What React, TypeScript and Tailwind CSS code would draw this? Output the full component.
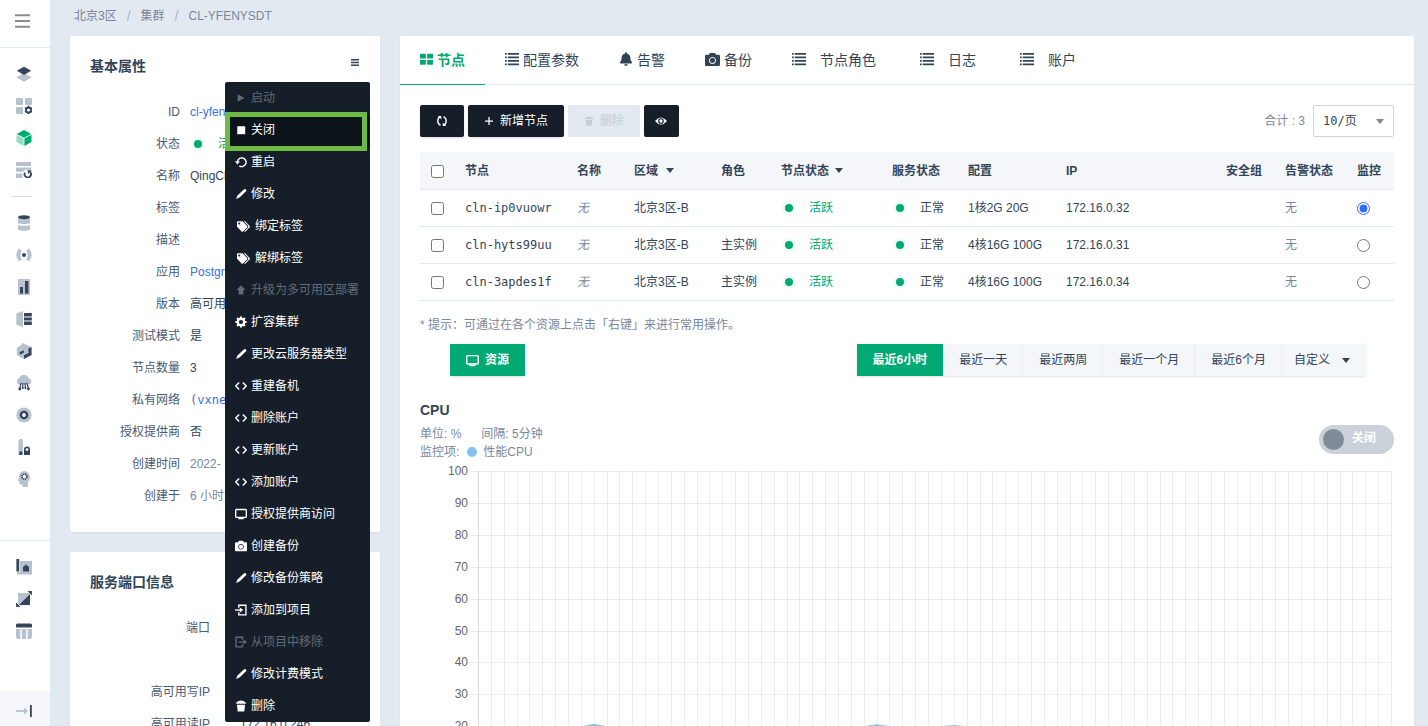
import { useState } from 'react';
import type { ReactNode } from 'react';
import { FaBell, FaCamera, FaTags } from 'react-icons/fa';

const DARK = '#36435c';
const LIGHT = '#b6c2cd';

function Svg({ size = 16, children }: { size?: number; children: ReactNode }) {
  return (
    <svg width={size} height={size} viewBox="0 0 16 16" fill="none" className="shrink-0" aria-hidden="true">
      {children}
    </svg>
  );
}

type NavItem = { label: string; icon: ReactNode };

const computeNav: NavItem[] = [
  {
    label: '产品总览',
    icon: (
      <>
        <path d="M8 7 15.5 11.3 8 15.8.5 11.3Z" fill={LIGHT} />
        <path d="M8 .4 15.5 4.7 8 9.2.5 4.7Z" fill={DARK} stroke="#fff" strokeWidth=".4" />
      </>
    ),
  },
  {
    label: '应用管理',
    icon: (
      <>
        <path d="M1 0h5a1 1 0 0 1 1 1v5a1 1 0 0 1-1 1H1a1 1 0 0 1-1-1V1a1 1 0 0 1 1-1ZM10 0h5a1 1 0 0 1 1 1v5a1 1 0 0 1-1 1h-5a1 1 0 0 1-1-1V1a1 1 0 0 1 1-1ZM1 9h6v7H1a1 1 0 0 1-1-1v-5a1 1 0 0 1 1-1Z" fill={LIGHT} />
        <circle cx="12.5" cy="12" r="2.5" stroke={DARK} strokeWidth="1.8" />
        <path
          d="M12.5 7.8v1.6M12.5 14.6v1.4M9 10l1.4.8M14.6 13.2l1.4.8M9 14l1.4-.8M14.6 10.8l1.4-.8"
          stroke={DARK}
          strokeWidth="1.8"
        />
      </>
    ),
  },
  {
    label: '集群',
    icon: (
      <>
        <path d="M8 0 15.2 3.9 8 7.8.8 3.9Z" fill="#00aa72" />
        <path d="M.5 4.8 7.6 8.6V16L.5 12Z" fill="#99dcc5" />
        <path d="M15.5 4.8 8.4 8.6V16l7.1-4Z" fill="#00aa72" />
      </>
    ),
  },
  {
    label: '定时任务',
    icon: (
      <>
        <path d="M0 0h15v4H0zM0 5.6h15v2.2H9L7.4 9.8H0zM0 11.6h6.2V16H0z" fill={LIGHT} />
        <path d="M9 10.6a3.2 3.2 0 1 0 5.2-.4" stroke={DARK} strokeWidth="1.8" />
        <path d="M11.4 8.2h4.4l-3.4 3.8Z" fill={DARK} />
      </>
    ),
  },
];

const serviceNav: NavItem[] = [
  {
    label: '数据库',
    icon: (
      <>
        <path d="M2 3v5c0 1.3 12 1.3 12 0V3ZM2 10v4c0 2.4 12 2.4 12 0v-4c-2 1.2-10 1.2-12 0Z" fill={LIGHT} />
        <ellipse cx="8" cy="2.2" rx="6" ry="2" fill={DARK} />
      </>
    ),
  },
  {
    label: '消息队列',
    icon: (
      <>
        <path d="M3 1.5 5.6 3.4Q3.4 8 5.6 12.6L3 14.5Q-2.4 8 3 1.5ZM13 1.5l-2.6 1.9q2.2 4.6 0 9.2L13 14.5Q18.4 8 13 1.5Z" fill={LIGHT} />
        <circle cx="8" cy="8" r="2" fill={DARK} />
      </>
    ),
  },
  {
    label: '大数据',
    icon: (
      <>
        <path d="M2 0h12v16H2z" fill={LIGHT} />
        <path d="M4 8h3v6.4H4zM9 2h3.4v12.4H9z" fill={DARK} />
      </>
    ),
  },
  {
    label: '存储',
    icon: (
      <>
        <path d="M.3 2.6 7 0v16L.3 13.4Z" fill={LIGHT} />
        <path d="M8 2h7.8v3.4H8zM8 6.4h7.8v3.2H8zM8 10.6h7.8V14H8z" fill={DARK} />
      </>
    ),
  },
  {
    label: '容器',
    icon: (
      <>
        <path d="M7 0 12 2.4 15.5 4 8 16 .8 12V4.6L4 3Z" fill={LIGHT} />
        <path d="M15.6 4 12.4 5.6V10L8 12.2V16l7.6-4ZM3.8 9l4-1.8v2.6l-4 2Z" fill={DARK} />
      </>
    ),
  },
  {
    label: '物联网',
    icon: (
      <>
        <path d="M3 9.6A3.6 3.6 0 0 1 3.2 3 5 5 0 0 1 12.6 3.2 3.4 3.4 0 0 1 13.4 9.6Z" fill={LIGHT} />
        <path d="M5 8 3.6 14M7 8l-.4 4.6M9 8l.4 4.6M11 8l1.6 6" stroke={DARK} strokeWidth="1.2" />
        <circle cx="3.8" cy="14" r="1.4" fill={DARK} />
        <circle cx="6.7" cy="13" r="1.1" fill={DARK} />
        <circle cx="9.5" cy="13" r="1.1" fill={DARK} />
        <circle cx="12.4" cy="14" r="1.4" fill={DARK} />
      </>
    ),
  },
  {
    label: '镜像',
    icon: (
      <>
        <circle cx="8" cy="8" r="7.6" fill={LIGHT} />
        <circle cx="8" cy="8" r="3.1" fill="#fff" stroke={DARK} strokeWidth="2.4" />
      </>
    ),
  },
  {
    label: '安全',
    icon: (
      <>
        <path d="M2.4 16V2l1.4-2h2L7 2v14Z" fill={LIGHT} />
        <path d="M3.4 12.4h2.8V16H3.4zM8 10h6v6H8z" fill={DARK} />
        <circle cx="11" cy="10.6" r="2.2" fill="#fff" stroke={DARK} strokeWidth="1.6" />
      </>
    ),
  },
  {
    label: '人工智能',
    icon: (
      <>
        <path d="M8 0a6 6 0 0 1 6 6c0 2-.6 3.6-2 5v5H6.4v-2.4H3.6v-3L2 10 3 6A5.4 5.4 0 0 1 8 0Z" fill={LIGHT} />
        <circle cx="8.4" cy="5.6" r="2.5" fill="#fff" stroke={DARK} strokeWidth="1.6" strokeDasharray="1.4 .6" />
      </>
    ),
  },
];

const bottomNav: NavItem[] = [
  {
    label: '企业中心',
    icon: (
      <>
        <path d="M4 2h12v13.5H1V13h3Z" fill={LIGHT} />
        <path d="M.4 0h2.8v12.4H.4zM7 12.4V8l3-2.6L13 8v4.4Z" fill={DARK} />
      </>
    ),
  },
  {
    label: '迁移',
    icon: (
      <>
        <path d="M2 2h12v12H2z" fill={LIGHT} />
        <path d="M14 3v11H3Z" fill={DARK} />
        <path d="M10.6-.4h5.8v5.8ZM-.4 10.6v5.8h5.8Z" fill={DARK} stroke="#fff" strokeWidth=".8" />
      </>
    ),
  },
  {
    label: '控制台',
    icon: (
      <>
        <path d="M0 6h4.4v10H2a2 2 0 0 1-2-2ZM5.8 6h4.4v10H5.8zM11.6 6H16v8a2 2 0 0 1-2 2h-2.4Z" fill={LIGHT} />
        <path d="M0 4.6V2A1.6 1.6 0 0 1 1.6.4h12.8A1.6 1.6 0 0 1 16 2v2.6Z" fill={DARK} />
      </>
    ),
  },
];

const glyphs = {
  play: <path d="M3.6 3v10L12.6 8Z" fill="currentColor" />,
  stop: <path d="M3 3h10.6v10.6H3z" fill="currentColor" />,
  restart: (
    <>
      <path d="M3.2 8.6a5.8 5.8 0 1 1 2.6 4.6" stroke="currentColor" strokeWidth="1.9" />
      <path d="M0 7h6.6L3.2 11.4Z" fill="currentColor" />
    </>
  ),
  pencil: <path d="M12.2 1.6Q13.4.8 14.6 2t.2 2.4L6 12.8 1.4 14.6l1.8-4.6Z" fill="currentColor" />,
  up: <path d="M8 1.6 14 8h-2.8v6H4.8V8H2Z" fill="currentColor" />,
  gear: (
    <>
      <circle cx="8" cy="8" r="4.3" stroke="currentColor" strokeWidth="3" />
      <path
        d="M8 .6v3M8 12.4v3M.6 8h3M12.4 8h3M2.8 2.8l2 2M11.2 11.2l2 2M2.8 13.2l2-2M11.2 4.8l2-2"
        stroke="currentColor"
        strokeWidth="2.8"
      />
    </>
  ),
  code: <path d="M5.6 3.4 1 8l4.6 4.6M10.4 3.4 15 8l-4.6 4.6" stroke="currentColor" strokeWidth="1.9" />,
  monitor: (
    <>
      <rect x=".9" y="2" width="14.2" height="10.4" rx="1.2" stroke="currentColor" strokeWidth="1.8" />
      <path d="M4.4 13h7.2v2H4.4z" fill="currentColor" />
    </>
  ),
  enter: (
    <>
      <path d="M5 5V1.6h9.6v12.8H5V11" stroke="currentColor" strokeWidth="1.8" />
      <path d="M0 8h7.4" stroke="currentColor" strokeWidth="1.8" />
      <path d="M6.4 4.6 11 8l-4.6 3.4Z" fill="currentColor" />
    </>
  ),
  leave: (
    <>
      <path d="M10 5V1.6H1.4v12.8H10V11" stroke="currentColor" strokeWidth="1.8" />
      <path d="M5 8h7.4" stroke="currentColor" strokeWidth="1.8" />
      <path d="M11.4 4.6 16 8l-4.6 3.4Z" fill="currentColor" />
    </>
  ),
  trash: (
    <>
      <path d="M1.6 3.2Q8-1.6 14.4 3.2V5H1.6Z" fill="currentColor" />
      <path d="M2.6 6.4h10.8L12.4 15.4H3.6Z" fill="currentColor" />
    </>
  ),
  grid: (
    <path
      d="M1 .8h5.2q1 0 1 1v5H0v-5q0-1 1-1ZM9.8.8H15q1 0 1 1v5H8.8v-5q0-1 1-1ZM0 8.6h7.2v5q0 1-1 1H1q-1 0-1-1ZM8.8 8.6H16v5q0 1-1 1H9.8q-1 0-1-1Z"
      fill="currentColor"
    />
  ),
  list: (
    <path
      d="M0 1h2v2.2H0zM3.2 1H16v2.2H3.2zM0 5h2v2.2H0zM3.2 5H16v2.2H3.2zM0 9h2v2.2H0zM3.2 9H16v2.2H3.2zM0 13h2v2.2H0zM3.2 13H16v2.2H3.2z"
      fill="currentColor"
    />
  ),
  refresh: (
    <>
      <path d="M6 13.8Q2.4 12 2.4 8T5.6 2.6M10 2.2Q13.6 4 13.6 8t-3.2 5.4" stroke="currentColor" strokeWidth="1.8" />
      <path d="M2.4 1.4H7v4.6ZM13.6 14.6H9V10Z" fill="currentColor" />
    </>
  ),
  plus: <path d="M8 1.6v12.8M1.6 8h12.8" stroke="currentColor" strokeWidth="2" />,
  eye: (
    <>
      <path d="M0 8Q8-1.6 16 8 8 17.6 0 8Z" fill="currentColor" />
      <circle cx="8" cy="8" r="3" fill="currentColor" stroke="#161f29" strokeWidth="1.6" />
    </>
  ),
};

type Glyph = keyof typeof glyphs;

type MenuItem = { label: string; icon: Glyph | 'tags' | 'camera'; disabled?: boolean };

const menuItems: MenuItem[] = [
  { label: '启动', icon: 'play', disabled: true },
  { label: '关闭', icon: 'stop' },
  { label: '重启', icon: 'restart' },
  { label: '修改', icon: 'pencil' },
  { label: '绑定标签', icon: 'tags' },
  { label: '解绑标签', icon: 'tags' },
  { label: '升级为多可用区部署', icon: 'up', disabled: true },
  { label: '扩容集群', icon: 'gear' },
  { label: '更改云服务器类型', icon: 'pencil' },
  { label: '重建备机', icon: 'code' },
  { label: '删除账户', icon: 'code' },
  { label: '更新账户', icon: 'code' },
  { label: '添加账户', icon: 'code' },
  { label: '授权提供商访问', icon: 'monitor' },
  { label: '创建备份', icon: 'camera' },
  { label: '修改备份策略', icon: 'pencil' },
  { label: '添加到项目', icon: 'enter' },
  { label: '从项目中移除', icon: 'leave', disabled: true },
  { label: '修改计费模式', icon: 'pencil' },
  { label: '删除', icon: 'trash' },
];

const nodes = [
  { id: 'cln-ip0vuowr', role: '', config: '1核2G 20G', ip: '172.16.0.32' },
  { id: 'cln-hyts99uu', role: '主实例', config: '4核16G 100G', ip: '172.16.0.31' },
  { id: 'cln-3apdes1f', role: '主实例', config: '4核16G 100G', ip: '172.16.0.34' },
];

const ranges = ['最近6小时', '最近一天', '最近两周', '最近一个月', '最近6个月'];

function NavGroup({ items }: { items: NavItem[] }) {
  return (
    <>
      {items.map((item) => (
        <a key={item.label} href="#" aria-label={item.label} className="flex h-8 items-center pl-4">
          <Svg>{item.icon}</Svg>
        </a>
      ))}
    </>
  );
}

function Sidebar() {
  return (
    <nav className="flex w-[50px] shrink-0 flex-col bg-white">
      <button aria-label="菜单" className="flex h-12 shrink-0 items-start border-b border-[#e3e9f1] pt-3.5 pl-[15px]">
        <svg width="15" height="14" viewBox="0 0 15 14" stroke="#8c8c8c" strokeWidth="2" aria-hidden="true">
          <path d="M0 1.2h15M0 7h15M0 12.8h15" />
        </svg>
      </button>
      <div className="pt-2.5">
        <NavGroup items={computeNav} />
        <hr className="mx-3 my-2.5 w-5 border-[#d5dee8]" />
        <NavGroup items={serviceNav} />
      </div>
      <div className="mt-auto border-t border-[#e3e9f1] pt-2.5 pb-11">
        <NavGroup items={bottomNav} />
      </div>
      <button aria-label="展开" className="flex h-[35px] shrink-0 items-center bg-[#f4f6fa] pt-1 pl-4">
        <Svg>
          <path d="M0 8h9" stroke={LIGHT} strokeWidth="1.8" />
          <path d="M8 4.4 12 8l-4 3.6Z" fill={LIGHT} />
          <path d="M14 2h1.8v12H14z" fill={DARK} />
        </Svg>
      </button>
    </nav>
  );
}

function StatusDot() {
  return <span className="ml-1 size-2 shrink-0 rounded-full bg-[#00aa72] shadow-[0_0_0_3px_#f1fbf8]" />;
}

function Status({ children }: { children: ReactNode }) {
  return (
    <span className="flex items-center gap-4">
      <StatusDot />
      {children}
    </span>
  );
}

function Caret() {
  return (
    <svg width="8" height="5" viewBox="0 0 8 5" fill="currentColor" className="shrink-0" aria-hidden="true">
      <path d="M0 0h8L4 5Z" />
    </svg>
  );
}

function ActionMenu() {
  return (
    <div role="menu" className="absolute top-[46px] right-2.5 z-10 w-[145px] rounded-xs bg-[#161f29] text-white">
      {menuItems.map((item, i) => (
        <div key={item.label} className="relative">
          <button
            role="menuitem"
            disabled={item.disabled}
            className={`flex h-8 w-full items-center gap-1 pl-2.5 whitespace-nowrap disabled:text-[#636b74] ${i === 1 ? 'bg-[#0d131a]' : ''}`}
          >
            {item.icon === 'tags' ? (
              <span className="flex w-4 justify-center">
                <FaTags size={13} />
              </span>
            ) : item.icon === 'camera' ? (
              <FaCamera size={12} />
            ) : (
              <Svg size={12}>{glyphs[item.icon]}</Svg>
            )}
            {item.label}
          </button>
          {i === 1 && (
            <span className="pointer-events-none absolute -top-0.5 right-[3px] left-0 z-10 h-[39px] border-5 border-[#6dba44]" />
          )}
        </div>
      ))}
    </div>
  );
}

const link = 'text-[#3a6fe0]';

function Field({ label, children }: { label: string; children?: ReactNode }) {
  return (
    <div className="flex h-8 items-center gap-2.5 whitespace-nowrap">
      <dt className="w-[90px] shrink-0 text-right text-[#4a5974]">{label}</dt>
      <dd>{children}</dd>
    </div>
  );
}

function BasicInfo() {
  return (
    <section className="relative rounded-xs bg-white p-5 shadow-xs">
      <div className="mb-5 flex h-5 items-center justify-between">
        <h2 className="text-sm font-bold">基本属性</h2>
        <button aria-label="操作" className="-mt-2 mr-px">
          <svg width="8" height="7" viewBox="0 0 8 7" stroke="currentColor" strokeWidth="1.4" aria-hidden="true">
            <path d="M0 .8h8M0 3.5h8M0 6.2h8" />
          </svg>
        </button>
      </div>
      <dl>
        <Field label="ID">
          <a href="#" className={link}>cl-yfenysdt</a>
        </Field>
        <Field label="状态">
          <Status>
            <span className="text-[#00aa72]">活跃</span>
          </Status>
        </Field>
        <Field label="名称">QingCloud</Field>
        <Field label="标签" />
        <Field label="描述" />
        <Field label="应用">
          <a href="#" className={link}>PostgreSQL</a>
        </Field>
        <Field label="版本">高可用版</Field>
        <Field label="测试模式">是</Field>
        <Field label="节点数量">3</Field>
        <Field label="私有网络">
          <a href="#" className={`font-[DejaVu_Sans_Mono] ${link}`}>(vxnet)</a>
        </Field>
        <Field label="授权提供商">否</Field>
        <Field label="创建时间">
          <span className="text-[#79879c]">2022-</span>
        </Field>
        <Field label="创建于">
          <span className="text-[#79879c]">6 小时前</span>
        </Field>
      </dl>
      <ActionMenu />
    </section>
  );
}

function PortInfo() {
  return (
    <section className="rounded-xs bg-white p-5 shadow-xs">
      <h2 className="mb-5 h-5 text-sm leading-5 font-bold">服务端口信息</h2>
      <dl className="grid grid-cols-[120px_1fr] gap-x-[30px] leading-8">
        <dt className="h-16 text-right text-[#4a5974]">端口</dt>
        <dd />
        <dt className="text-right text-[#4a5974]">高可用写IP</dt>
        <dd />
        <dt className="text-right text-[#4a5974]">高可用读IP</dt>
        <dd>172.16.0.246</dd>
      </dl>
    </section>
  );
}

const tabs = [
  { label: '节点', icon: <Svg size={13}>{glyphs.grid}</Svg>, style: 'gap-1 pr-5 border-[#00aa72] text-[#00aa72] font-bold' },
  { label: '配置参数', icon: <Svg size={14}>{glyphs.list}</Svg>, style: 'gap-1 pr-5 border-transparent' },
  { label: '告警', icon: <FaBell size={14} />, style: 'gap-1 pr-5 border-transparent' },
  { label: '备份', icon: <FaCamera size={15} />, style: 'gap-1 pr-5 border-transparent' },
  { label: '节点角色', icon: <Svg size={14}>{glyphs.list}</Svg>, style: 'gap-3.5 pr-6 border-transparent' },
  { label: '日志', icon: <Svg size={14}>{glyphs.list}</Svg>, style: 'gap-3.5 pr-6 border-transparent' },
  { label: '账户', icon: <Svg size={14}>{glyphs.list}</Svg>, style: 'gap-3.5 pr-6 border-transparent' },
];

function Toolbar() {
  return (
    <div className="flex h-8 items-center gap-1">
      <button aria-label="刷新" className="flex h-8 w-11 items-center justify-center rounded-xs bg-[#161f29] text-white shadow-sm">
        <Svg size={12}>{glyphs.refresh}</Svg>
      </button>
      <button className="flex h-8 w-24 items-center justify-center gap-1.5 rounded-xs bg-[#161f29] text-white shadow-sm">
        <Svg size={10}>{glyphs.plus}</Svg>
        新增节点
      </button>
      <button disabled className="flex h-8 w-[72px] items-center justify-center gap-1.5 rounded-xs bg-[#e3e9f1] text-[#c3cdd8]">
        <Svg size={10}>{glyphs.trash}</Svg>
        删除
      </button>
      <button aria-label="显示" className="flex h-8 w-[35px] items-center justify-center rounded-xs bg-[#161f29] pr-0.5 text-white">
        <Svg size={12}>{glyphs.eye}</Svg>
      </button>
      <label htmlFor="page-size" className="mr-1 ml-auto text-[#79879c]">
        合计 : 3
      </label>
      <div className="relative">
        <select
          id="page-size"
          className="h-8 w-[81px] appearance-none rounded-xs border border-[#cbd5e1] bg-white px-[9px] font-[DejaVu_Sans_Mono,Noto_Sans_CJK_SC,monospace]"
        >
          <option>10/页</option>
          <option>20/页</option>
          <option>50/页</option>
        </select>
        <span className="pointer-events-none absolute top-3.5 right-2.5 text-[#79879c]">
          <Caret />
        </span>
      </div>
    </div>
  );
}

function NodeTable() {
  const [monitored, setMonitored] = useState(nodes[0].id);

  return (
    <table className="mt-[15px] w-full table-fixed border-separate border-spacing-0 text-left">
      <colgroup>
        <col className="w-[45px]" />
        <col className="w-[112px]" />
        <col className="w-[57px]" />
        <col className="w-[87px]" />
        <col className="w-[60px]" />
        <col className="w-[111px]" />
        <col className="w-[76px]" />
        <col className="w-[98px]" />
        <col />
        <col className="w-[59px]" />
        <col className="w-[72px]" />
        <col className="w-[37px]" />
      </colgroup>
      <thead className="bg-[#f4f6fa]">
        <tr className="h-[38px] *:border-b *:border-[#e3e9f1] *:font-bold *:whitespace-nowrap">
          <th className="pt-0.5 pl-[11px]">
            <input type="checkbox" aria-label="全选" className="block" />
          </th>
          <th>节点</th>
          <th>名称</th>
          <th>
            <span className="flex items-center gap-2">
              区域 <Caret />
            </span>
          </th>
          <th>角色</th>
          <th>
            <span className="flex items-center gap-1.5">
              节点状态 <Caret />
            </span>
          </th>
          <th>服务状态</th>
          <th>配置</th>
          <th>IP</th>
          <th>安全组</th>
          <th>告警状态</th>
          <th>监控</th>
        </tr>
      </thead>
      <tbody>
        {nodes.map((node) => (
          <tr key={node.id} className="h-[37px] *:border-b *:border-[#e3e9f1] *:whitespace-nowrap">
            <td className="pl-[11px]">
              <input type="checkbox" aria-label={node.id} className="block" />
            </td>
            <td className="font-[DejaVu_Sans_Mono]">{node.id}</td>
            <td className="text-[#79879c] italic">无</td>
            <td>北京3区-B</td>
            <td>{node.role}</td>
            <td className="text-[#00aa72]">
              <Status>活跃</Status>
            </td>
            <td>
              <Status>正常</Status>
            </td>
            <td>{node.config}</td>
            <td>{node.ip}</td>
            <td />
            <td className="text-[#79879c]">无</td>
            <td>
              <input
                type="radio"
                name="monitor"
                aria-label={`监控 ${node.id}`}
                checked={monitored === node.id}
                onChange={() => setMonitored(node.id)}
                className="block accent-[#316df6]"
              />
            </td>
          </tr>
        ))}
      </tbody>
    </table>
  );
}

function RangeBar() {
  const [range, setRange] = useState(ranges[0]);

  return (
    <div className="mt-2.5 flex h-8 items-center justify-between pr-7 pl-[30px]">
      <button className="flex h-8 w-[75px] items-center justify-center gap-1.5 bg-[#00aa72] font-bold text-white shadow-sm">
        <Svg size={13}>{glyphs.monitor}</Svg>
        资源
      </button>
      <div className="flex h-8 rounded-xs bg-[#f4f6fa] shadow-sm">
        {ranges.map((r) => (
          <button
            key={r}
            onClick={() => setRange(r)}
            className={`px-4 ${r === range ? 'bg-[#00aa72] font-bold text-white' : 'shadow-[inset_-1px_0_#e9edf3]'}`}
          >
            {r}
          </button>
        ))}
        <button className="flex items-center gap-3 pr-4 pl-3">
          自定义 <Caret />
        </button>
      </div>
    </div>
  );
}

// one sample every five minutes, six hours in all
const peaks: Record<number, number> = { 8: 19.9, 9: 20.8, 10: 20, 30: 20, 31: 20.6, 32: 20.1, 36: 20, 37: 20.4, 38: 20 };
const cpu = Array.from({ length: 72 }, (_, i) => peaks[i] ?? (i % 2 ? 19.2 : 18.8));

const left = 58;
const top = 10;
const plotWidth = 913;
const plotHeight = 319;
const xAt = (i: number) => left + (i * plotWidth) / (cpu.length - 1);
const yAt = (value: number) => top + ((100 - value) / 100) * plotHeight;

function CpuChart() {
  const ticks = [100, 90, 80, 70, 60, 50, 40, 30, 20, 10, 0];
  const area = cpu.map((v, i) => `${xAt(i)},${yAt(v)}`).join(' ');

  return (
    <svg viewBox="0 0 974 350" className="block w-full" role="img" aria-label="CPU">
      <g stroke="#000" strokeOpacity=".07" shapeRendering="crispEdges">
        {ticks.map((t) => (
          <line key={t} x1={left - 9} x2={left + plotWidth} y1={Math.round(yAt(t)) + 0.5} y2={Math.round(yAt(t)) + 0.5} />
        ))}
        {cpu.map((_, i) => (
          <line
            key={i}
            x1={Math.round(xAt(i)) + 0.5}
            x2={Math.round(xAt(i)) + 0.5}
            y1={top}
            y2={yAt(0)}
            strokeOpacity={i === 0 ? 0.14 : 0.07}
          />
        ))}
      </g>
      <polygon points={`${left},${yAt(0)} ${area} ${left + plotWidth},${yAt(0)}`} fill="#90c5e0" />
      <g fill="#666" fontSize="12" textAnchor="end">
        {ticks.map((t) => (
          <text key={t} x={left - 10} y={Math.round(yAt(t)) + 4}>
            {t}
          </text>
        ))}
      </g>
    </svg>
  );
}

function CpuMonitor() {
  const [live, setLive] = useState(false);

  return (
    <section className="mt-6">
      <h3 className="text-sm leading-5 font-bold">CPU</h3>
      <div className="mt-[5px] flex items-start justify-between">
        <div className="leading-[18px] text-[#79879c]">
          <p className="flex gap-5">
            <span>单位: %</span>
            <span>间隔: 5分钟</span>
          </p>
          <p className="flex items-center">
            监控项:
            <span className="mr-1.5 ml-2 size-2.5 rounded-full bg-[#85c1ed]" />
            性能CPU
          </p>
        </div>
        <button
          role="switch"
          aria-checked={live}
          onClick={() => setLive(!live)}
          className="flex h-[29px] w-[75px] items-center gap-2 rounded-full bg-[#cad1d9] pl-1 font-bold text-white"
        >
          <span className="size-[21px] rounded-full bg-[#808b98]" />
          <span className="pb-1">{live ? '开启' : '关闭'}</span>
        </button>
      </div>
      <CpuChart />
    </section>
  );
}

export default function App() {
  return (
    <div className="flex h-screen overflow-hidden bg-[#e3e9f1] font-[Liberation_Sans,Noto_Sans_CJK_SC,sans-serif] text-xs text-[#324558]">
      <Sidebar />
      <div className="min-w-0 flex-1 overflow-hidden pr-3.5 pl-5">
        <nav className="mb-1 flex h-8 items-center gap-2.5 pl-1 text-[#79879c]">
          <a href="#">北京3区</a>
          <span className="text-sm text-[#a3b8cc]">/</span>
          <a href="#">集群</a>
          <span className="text-sm text-[#a3b8cc]">/</span>
          <span>CL-YFENYSDT</span>
        </nav>
        <div className="flex gap-5">
          <aside className="flex w-[310px] shrink-0 flex-col gap-5">
            <BasicInfo />
            <PortInfo />
          </aside>
          <main className="min-w-0 flex-1 rounded-xs bg-white shadow-xs">
            <div className="flex h-[49px] border-b border-[#e3e9f1] text-sm">
              {tabs.map((tab) => (
                <button key={tab.label} className={`-mb-px flex items-center border-b pl-5 whitespace-nowrap ${tab.style}`}>
                  <span className="pb-0.5">{tab.icon}</span>
                  {tab.label}
                </button>
              ))}
            </div>
            <div className="p-5">
              <Toolbar />
              <NodeTable />
              <p className="mt-[15px] leading-[18px] text-[#79879c]">* 提示：可通过在各个资源上点击「右键」来进行常用操作。</p>
              <RangeBar />
              <CpuMonitor />
            </div>
          </main>
        </div>
      </div>
    </div>
  );
}
